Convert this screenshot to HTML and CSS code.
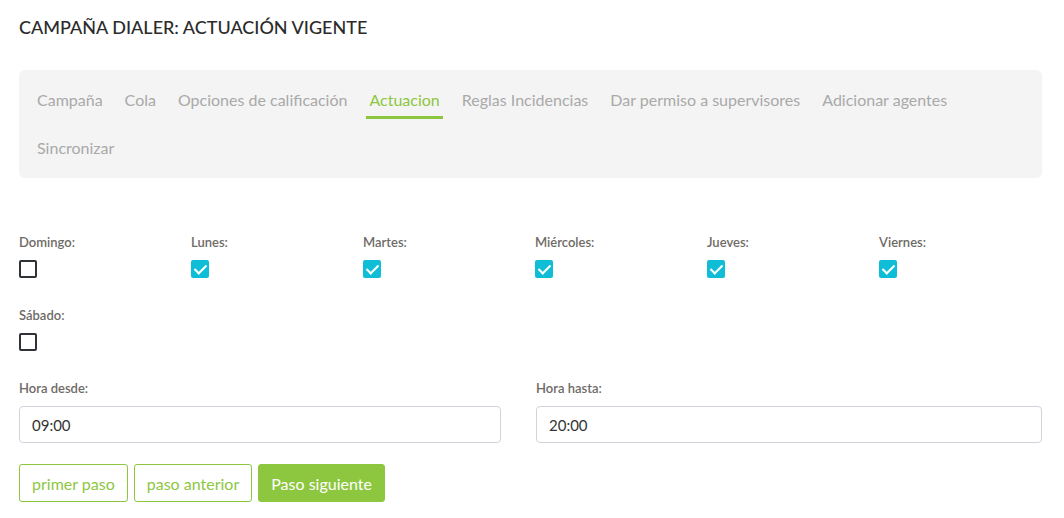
FILE: index.html
```html
<!DOCTYPE html>
<html lang="es">
<head>
    <meta charset="UTF-8">
    <meta name="viewport" content="width=device-width, initial-scale=1.0">
    <title>Campaña Dialer - Actuación vigente</title>
    <link rel="stylesheet" href="styles.css">
</head>
<body>
    <div class="page">
        <h1 class="page-title">CAMPAÑA DIALER: ACTUACIÓN VIGENTE</h1>

        <nav class="steps">
            <a class="step" href="#">Campaña</a>
            <a class="step" href="#">Cola</a>
            <a class="step" href="#">Opciones de calificación</a>
            <a class="step active" href="#">Actuacion</a>
            <a class="step" href="#">Reglas Incidencias</a>
            <a class="step" href="#">Dar permiso a supervisores</a>
            <a class="step" href="#">Adicionar agentes</a>
            <a class="step" href="#">Sincronizar</a>
        </nav>

        <form class="actuacion-form">
            <div class="days">
                <div class="day">
                    <label for="domingo">Domingo:</label>
                    <input type="checkbox" id="domingo" class="check">
                </div>
                <div class="day">
                    <label for="lunes">Lunes:</label>
                    <input type="checkbox" id="lunes" class="check" checked>
                </div>
                <div class="day">
                    <label for="martes">Martes:</label>
                    <input type="checkbox" id="martes" class="check" checked>
                </div>
                <div class="day">
                    <label for="miercoles">Miércoles:</label>
                    <input type="checkbox" id="miercoles" class="check" checked>
                </div>
                <div class="day">
                    <label for="jueves">Jueves:</label>
                    <input type="checkbox" id="jueves" class="check" checked>
                </div>
                <div class="day">
                    <label for="viernes">Viernes:</label>
                    <input type="checkbox" id="viernes" class="check" checked>
                </div>
                <div class="day">
                    <label for="sabado">Sábado:</label>
                    <input type="checkbox" id="sabado" class="check">
                </div>
            </div>

            <div class="hours">
                <div class="field">
                    <label for="hora_desde">Hora desde:</label>
                    <input type="text" id="hora_desde" class="text-input" value="09:00">
                </div>
                <div class="field">
                    <label for="hora_hasta">Hora hasta:</label>
                    <input type="text" id="hora_hasta" class="text-input" value="20:00">
                </div>
            </div>

            <div class="actions">
                <button type="button" class="btn btn-outline">primer paso</button>
                <button type="button" class="btn btn-outline">paso anterior</button>
                <button type="submit" class="btn btn-primary">Paso siguiente</button>
            </div>
        </form>
    </div>
</body>
</html>
```

FILE: styles.css
```css
body {
    margin: 0;
    padding: 0;
    font-family: Lato, "Noto Sans", sans-serif;
    background-color: #fff;
    color: #333;
}

.page {
    padding: 16px 22px 0 19px;
}

.page-title {
    margin: 0;
    font-size: 18px;
    line-height: 22px;
    font-weight: 500;
    color: #2b2b2b;
}

/* wizard tabs */
.steps {
    margin-top: 32px;
    padding: 6px 15px;
    background-color: #f4f4f4;
    border-radius: 6px;
    display: flex;
    flex-wrap: wrap;
    column-gap: 16px;
}

.step {
    padding: 13px 3px 5px;
    margin-bottom: 5px;
    line-height: 22px;
    font-size: 16px;
    color: #a9a9a9;
    text-decoration: none;
    border-bottom: 3px solid transparent;
}

.step.active {
    color: #8dc63f;
    border-bottom-color: #8dc63f;
}

/* form */
.actuacion-form {
    margin-top: 55px;
}

.actuacion-form label {
    display: block;
    font-size: 13px;
    line-height: 18px;
    font-weight: 600;
    color: #6e6a66;
    margin-bottom: 9px;
}

.days {
    display: grid;
    grid-template-columns: repeat(6, 172px);
    row-gap: 28px;
}

.check {
    appearance: none;
    -webkit-appearance: none;
    margin: 0;
    width: 18px;
    height: 18px;
    border: 2px solid #2f3337;
    border-radius: 2px;
    background-color: #fff;
    position: relative;
    display: block;
}

.check:checked {
    background-color: #10bdd6;
    border-color: #10bdd6;
}

.check:checked::after {
    content: "";
    position: absolute;
    left: 4px;
    top: 0px;
    width: 5px;
    height: 10px;
    border-right: 2px solid #fff;
    border-bottom: 2px solid #fff;
    transform: rotate(45deg);
}

.hours {
    margin-top: 28px;
    display: grid;
    grid-template-columns: 482px 1fr;
    column-gap: 35px;
}

.text-input {
    box-sizing: border-box;
    width: 100%;
    height: 37px;
    padding: 0 12px;
    border: 1px solid #cfd4db;
    border-radius: 4px;
    font-family: inherit;
    font-size: 15px;
    color: #333;
}

.actions {
    margin-top: 21px;
    display: flex;
    gap: 6px;
}

.btn {
    height: 38px;
    padding: 0 12px;
    border-radius: 3px;
    font-family: inherit;
    font-size: 16px;
    cursor: pointer;
}

.btn-outline {
    background-color: #fff;
    border: 1px solid #8dc63f;
    color: #8dc63f;
}

.btn-primary {
    background-color: #8dc63f;
    border: 1px solid #8dc63f;
    color: #fff;
}
```
